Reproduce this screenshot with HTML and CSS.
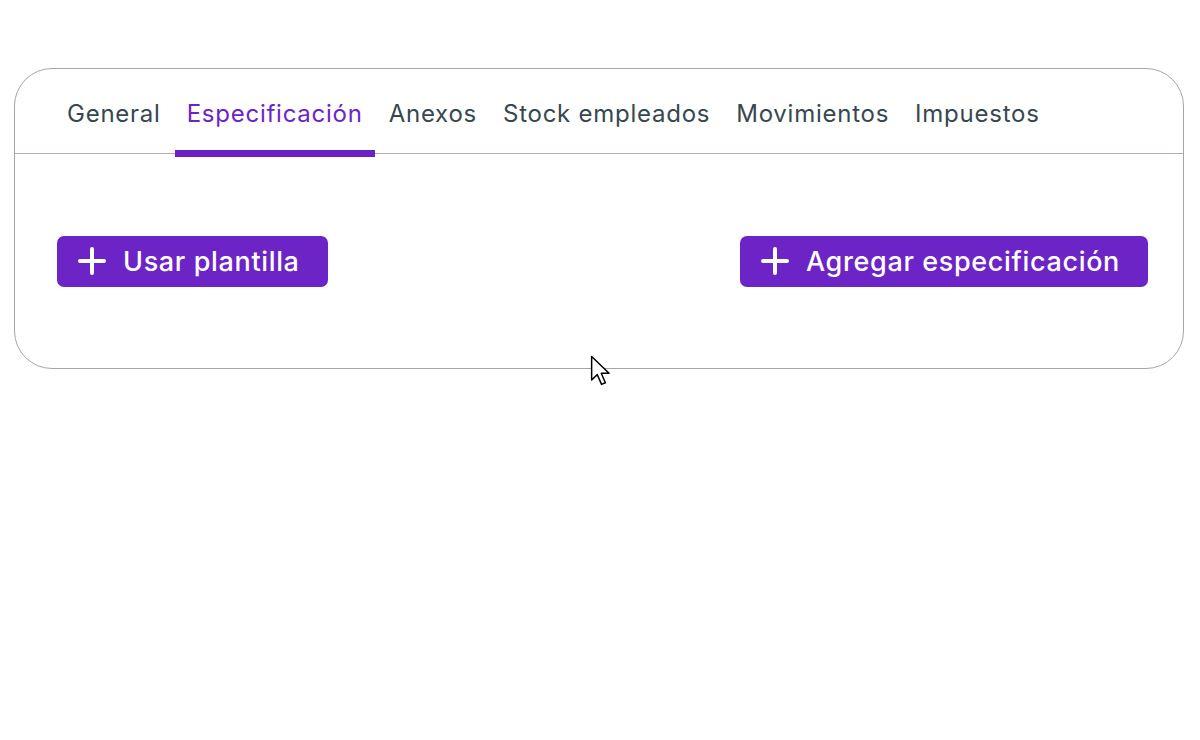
FILE: index.html
```html
<!DOCTYPE html>
<html lang="es">
<head>
  <meta charset="UTF-8">
  <title>Especificación</title>
  <link rel="stylesheet" href="styles.css">
</head>
<body>
  <div class="card">
    <nav class="tabs">
      <div class="tab">General</div>
      <div class="tab active">Especificación</div>
      <div class="tab">Anexos</div>
      <div class="tab">Stock empleados</div>
      <div class="tab">Movimientos</div>
      <div class="tab">Impuestos</div>
    </nav>

    <div class="panel">
      <button class="btn">
        <svg class="plus" viewBox="0 0 30 30"><path d="M15 3v24M3 15h24"/></svg>
        Usar plantilla
      </button>
      <button class="btn">
        <svg class="plus" viewBox="0 0 30 30"><path d="M15 3v24M3 15h24"/></svg>
        Agregar especificación
      </button>
    </div>
  </div>

  <!-- mouse pointer captured in the shot -->
  <svg class="cursor" viewBox="0 0 14 21" width="21" height="31">
    <path d="M1 1v16l3.8-3.7 2.9 6.6 2.6-1.1-2.8-6.4h5.3z" fill="#fff" stroke="#000" stroke-width="1" stroke-linejoin="round"/>
  </svg>
</body>
</html>
```

FILE: styles.css
```css
html, body {
  height: 100%;
}

body {
  position: relative;
  margin: 0;
  background: #fff;
  font-family: 'Inter', 'Open Sans', sans-serif;
}

.card {
  margin: 0 0 0 14px;
  position: relative;
  top: 68px;
  width: 1170px;
  border: 1.5px solid #a6a6a6;
  border-radius: 38px;
  box-sizing: border-box;
}

.tabs {
  display: flex;
  gap: 2px;
  padding: 0 0 0 40px;
  height: 84px;
  border-bottom: 1px solid #b8a9b0;
}

.tab {
  position: relative;
  padding: 4px 12px 0;
  display: flex;
  align-items: center;
  font-size: 24px;
  color: #37474f;
  letter-spacing: 0.75px;
}

.tab.active {
  color: #6c24c9;
}

.tab.active::after {
  content: "";
  position: absolute;
  left: 0;
  right: 0;
  bottom: -4px;
  height: 7px;
  background: #6a22c6;
}

.panel {
  display: flex;
  justify-content: space-between;
  align-items: center;
  height: 214px;
  padding: 0 35px 0 42px;
  box-sizing: border-box;
}

.btn {
  display: flex;
  align-items: center;
  gap: 16px;
  height: 51px;
  padding: 0 28px 0 20px;
  background: #6c24c7;
  color: #fff;
  border: none;
  border-radius: 7px;
  font-family: inherit;
  font-size: 27px;
  font-weight: 500;
  letter-spacing: 0.65px;
  cursor: pointer;
}

.plus {
  width: 30px;
  height: 30px;
  fill: none;
  stroke: #fff;
  stroke-width: 4;
  stroke-linecap: round;
}

.cursor {
  position: absolute;
  left: 590px;
  top: 355px;
}
```
